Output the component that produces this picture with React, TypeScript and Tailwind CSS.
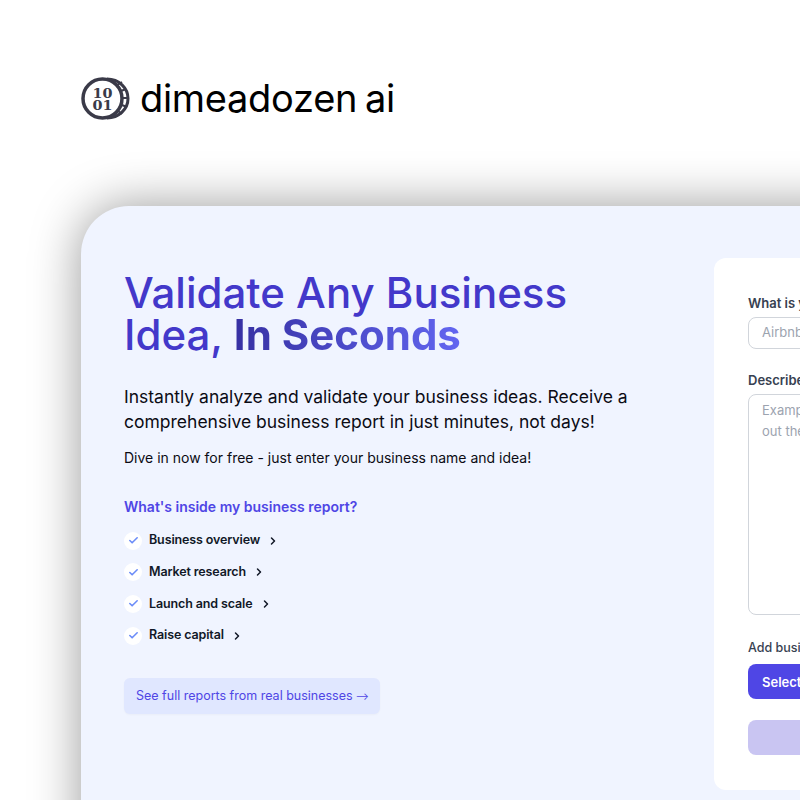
import { Check, ChevronRight } from 'lucide-react'

const reportItems = ['Business overview', 'Market research', 'Launch and scale', 'Raise capital']

function CoinLogo() {
  return (
    <svg width="49" height="43" viewBox="0 0 49 43" fill="none" className="shrink-0">
      <circle cx="21.5" cy="21.5" r="19.5" stroke="#3a3a48" strokeWidth="3.5" />
      <path d="M26 2C38 2 47 11 47 21.5S38 41 26 41" stroke="#3a3a48" strokeWidth="3" />
      <path d="M36 8l5-3M40 14l5-2M42 21h5M41 28l5 2M37 34l4 3" stroke="#3a3a48" strokeWidth="2" />
      <text x="21.5" y="20.5" textLength="20" lengthAdjust="spacingAndGlyphs" textAnchor="middle" fontFamily="'DejaVu Serif', serif" fontWeight="700" fontSize="13" fill="#3a3a48">10</text>
      <text x="21.5" y="32.5" textLength="20" lengthAdjust="spacingAndGlyphs" textAnchor="middle" fontFamily="'DejaVu Serif', serif" fontWeight="700" fontSize="13" fill="#3a3a48">01</text>
    </svg>
  )
}

function ReportItem({ label }: { label: string }) {
  return (
    <li className="flex items-center h-[18px]">
      <span className="w-[18px] h-[18px] rounded-full bg-white flex items-center justify-center shrink-0">
        <Check className="w-[11px] h-[11px] text-[#6b8cf8]" strokeWidth={3.5} />
      </span>
      <span className="ml-[7px] text-[12.5px] font-semibold text-[#111827] tracking-[-0.01em]">{label}</span>
      <ChevronRight className="ml-[7px] w-[12px] h-[12px] text-[#111827]" strokeWidth={3} />
    </li>
  )
}

export default function App() {
  return (
    <div className="w-[800px] h-[800px] overflow-hidden bg-white font-['Inter',sans-serif]">
      {/* Logo */}
      <div className="h-[206px] pl-[81px] pt-[77px]">
        <div className="flex items-center h-[43px] gap-[10px]">
          <CoinLogo />
          <span className="mb-[2px] text-[38px] leading-none text-black tracking-[-0.3px] [word-spacing:-2.5px]">dimeadozen ai</span>
        </div>
      </div>

      {/* Card */}
      <div className="ml-[81px] w-[1100px] h-[700px] flex rounded-tl-[48px] bg-[#f0f4ff] shadow-[0_0_50px_rgba(0,0,0,0.4)]">
        <div className="w-[633px] shrink-0 pl-[43px] pt-[65.5px]">
          <h1 className="text-[42px] leading-[42.5px] font-medium text-[#4338ca]">
            Validate Any Business
            <br />
            Idea,{' '}
            <span className="font-bold bg-gradient-to-r from-[#3730a3] to-[#6366f1] bg-clip-text text-transparent">In Seconds</span>
          </h1>
          <p className="mt-[27.5px] text-[17.5px] leading-[25px] text-[#0b0b14]">
            Instantly analyze and validate your business ideas. Receive a
            <br />
            comprehensive business report in just minutes, not days!
          </p>
          <p className="mt-[13px] text-[14px] leading-[22px] text-[#0b0b14]">Dive in now for free - just enter your business name and idea!</p>
          <h2 className="mt-[27px] text-[14px] leading-[22px] font-semibold text-[#4f46e5]">What's inside my business report?</h2>
          <ul className="mt-[13.5px] flex flex-col gap-[13.7px]">
            {reportItems.map((item) => (
              <ReportItem key={item} label={item} />
            ))}
          </ul>
          <a className="mt-[33px] w-[256px] h-[36px] flex items-center pl-[12px] pt-[2px] rounded-md bg-[#e0e7ff] shadow-[0_1px_2px_rgba(0,0,0,0.03)] text-[12.5px] text-[#4f46e5]">
            See full reports from real businesses<span className="ml-[3px] text-[10px]">⟶</span>
          </a>
        </div>

        {/* Form panel */}
        <div className="mt-[52px] w-[440px] h-[532px] shrink-0 rounded-xl bg-white px-[34px] pt-[37px]">
          <label className="block text-[13px] leading-[16px] font-semibold text-[#374151]">What is your business name?</label>
          <div className="mt-[6px] h-[32px] rounded-lg border border-[#d1d5db] flex items-center px-[13px] text-[13px] text-[#9ca3af]">Airbnb</div>
          <label className="mt-[23px] block text-[13px] leading-[16px] font-semibold text-[#374151]">Describe your business idea</label>
          <div className="mt-[6px] h-[221px] rounded-lg border border-[#d1d5db] px-[13px] py-[5px] text-[13px] leading-[21px] text-[#9ca3af]">
            Example: a marketplace that lets people rent
            <br />
            out their homes to travelers.
          </div>
          <label className="mt-[25px] block text-[12.5px] leading-[16px] font-medium text-[#374151]">Add business logo</label>
          <button className="mt-[8px] h-[35px] w-[200px] rounded-lg bg-[#4f46e5] text-left pl-[14px] pt-[2px] text-[13px] font-semibold text-white">Select file</button>
          <button className="mt-[21px] h-[35px] w-full block rounded-lg bg-[#c9c5f2]" />
        </div>
      </div>
    </div>
  )
}
